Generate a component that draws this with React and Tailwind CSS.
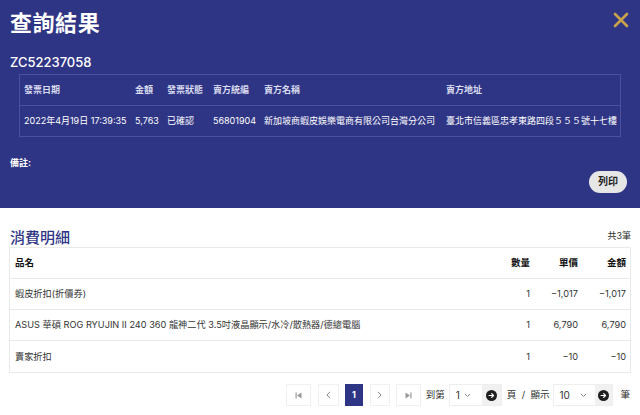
import React from 'react';

const font = { fontFamily: 'Inter, "Noto Sans CJK TC", sans-serif' };

const infoCols = 'grid grid-cols-[111px_32px_46px_51px_182px_1fr]';
const itemCols = 'grid grid-cols-[1fr_48px_48px_48px]';

const items = [
  { name: '蝦皮折扣(折價券)', qty: '1', price: '−1,017', total: '−1,017' },
  { name: 'ASUS 華碩 ROG RYUJIN II 240 360 龍神二代 3.5吋液晶顯示/水冷/散熱器/德總電腦', qty: '1', price: '6,790', total: '6,790' },
  { name: '賣家折扣', qty: '1', price: '−10', total: '−10' },
];

function GoIcon() {
  return (
    <svg width="11" height="11" viewBox="0 0 16 16">
      <circle cx="8" cy="8" r="8" fill="#1f1f1f" />
      <path d="M4.5 8h6.5M8.2 5.2 11 8l-2.8 2.8" stroke="#fff" strokeWidth="1.8" fill="none" strokeLinecap="round" strokeLinejoin="round" />
    </svg>
  );
}

function PageBtn({ children, w = 'w-[25px]' }) {
  return (
    <div className={`${w} h-[22px] flex items-center justify-center border border-[#f0f0f0] bg-white`}>
      {children}
    </div>
  );
}

const Edge = ({ dir }) => (
  <svg width="7" height="7" viewBox="0 0 7 7">
    {dir === 'left' ? (
      <>
        <rect x="0.5" y="0.5" width="1.2" height="6" fill="#999" />
        <path d="M6.5 0.5v6L2 3.5z" fill="#999" />
      </>
    ) : (
      <>
        <rect x="5.3" y="0.5" width="1.2" height="6" fill="#999" />
        <path d="M0.5 0.5v6L5 3.5z" fill="#999" />
      </>
    )}
  </svg>
);

const Arrow = ({ dir }) => (
  <svg width="5" height="8" viewBox="0 0 5 8">
    <path d={dir === 'left' ? 'M4 0.8 1 4l3 3.2' : 'M1 0.8 4 4 1 7.2'} stroke="#888" strokeWidth="1" fill="none" />
  </svg>
);

function Chevron() {
  return (
    <svg width="7" height="5" viewBox="0 0 7 5">
      <path d="M1 1l2.5 2.5L6 1" stroke="#888" strokeWidth="1" fill="none" />
    </svg>
  );
}

export default function App() {
  return (
    <div className="w-[640px] h-[415px] bg-white overflow-hidden" style={font}>
      {/* Header */}
      <div className="bg-[#2f3585] h-[208px] px-[10px] pt-[8px] text-white">
        <div className="flex justify-between items-start">
          <h1 className="text-[22px] leading-[30px] font-semibold tracking-wide">查詢結果</h1>
          <svg width="16" height="16" viewBox="0 0 16 16" className="mt-[4px] mr-[1px]">
            <path d="M2 2l12 12M14 2 2 14" stroke="#c9a24c" strokeWidth="2.6" strokeLinecap="round" />
          </svg>
        </div>
        <div className="mt-[15px] text-[13px] leading-[18px] font-medium">ZC52237058</div>
        <div className="ml-[9px] mr-[9px] mt-[3px] border border-[#4b519c] text-[9px]">
          <div className={`${infoCols} h-[31px] items-center border-b border-[#4b519c] font-bold text-[#d9dbef]`}>
            <div className="pl-[4px]">發票日期</div>
            <div className="pl-[4px]">金額</div>
            <div className="pl-[4px]">發票狀態</div>
            <div className="pl-[4px]">賣方統編</div>
            <div className="pl-[4px]">賣方名稱</div>
            <div className="pl-[4px]">賣方地址</div>
          </div>
          <div className={`${infoCols} h-[30px] items-center whitespace-nowrap`}>
            <div className="pl-[4px]">2022年4月19日 17:39:35</div>
            <div className="pl-[4px]">5,763</div>
            <div className="pl-[4px]">已確認</div>
            <div className="pl-[4px]">56801904</div>
            <div className="pl-[4px]">新加坡商蝦皮娛樂電商有限公司台灣分公司</div>
            <div className="pl-[4px]">臺北市信義區忠孝東路四段５５５號十七樓</div>
          </div>
        </div>
        <div className="mt-[19px] text-[9px] font-bold">備註:</div>
        <div className="flex justify-end mt-[1px] mr-[3px]">
          <button className="h-[22px] px-[9px] rounded-full bg-[#e6e6e6] text-[#222] text-[10px] font-bold">列印</button>
        </div>
      </div>

      {/* Items */}
      <div className="px-[9px]">
        <div className="flex justify-between items-end pt-[20px]">
          <h2 className="pl-[1px] text-[15px] leading-[19px] font-medium text-[#2f3585]">消費明細</h2>
          <span className="text-[9px] text-[#333] mb-[5px]">共3筆</span>
        </div>
        <div className="border border-[#eaeaea] text-[9.2px] text-[#333]">
          <div className={`${itemCols} h-[31px] items-center border-b border-[#eaeaea] font-bold text-[#111] text-[9.5px]`}>
            <div className="pl-[5px]">品名</div>
            <div className="text-right pr-[4px]">數量</div>
            <div className="text-right pr-[4px]">單價</div>
            <div className="text-right pr-[4px]">金額</div>
          </div>
          {items.map((it, i) => (
            <div
              key={i}
              className={`${itemCols} h-[31px] items-center ${i < items.length - 1 ? 'border-b border-[#eaeaea]' : ''}`}
            >
              <div className="pl-[5px] whitespace-nowrap">{it.name}</div>
              <div className="text-right pr-[4px]">{it.qty}</div>
              <div className="text-right pr-[4px]">{it.price}</div>
              <div className="text-right pr-[4px]">{it.total}</div>
            </div>
          ))}
        </div>

        {/* Pagination */}
        <div className="flex items-center justify-end mt-[11px] pr-[1px] text-[10px] text-[#333]">
          <PageBtn><Edge dir="left" /></PageBtn>
          <div className="ml-[7px]"><PageBtn w="w-[21px]"><Arrow dir="left" /></PageBtn></div>
          <div className="ml-[6px] w-[18px] h-[22px] flex items-center justify-center bg-[#2f3585] text-white text-[9px] font-bold">1</div>
          <div className="ml-[7px]"><PageBtn w="w-[20px]"><Arrow dir="right" /></PageBtn></div>
          <div className="ml-[6px]"><PageBtn><Edge dir="right" /></PageBtn></div>
          <span className="ml-[5px] text-[9.5px]">到第</span>
          <div className="ml-[4px] flex h-[22px] border border-[#eeeeee]">
            <div className="w-[32px] flex items-center gap-[4px] pl-[6px] bg-white">1 <Chevron /></div>
            <div className="w-[19px] flex items-center justify-center bg-[#f1f1f1]"><GoIcon /></div>
          </div>
          <span className="ml-[5px] text-[9.5px] whitespace-pre">頁  /  顯示</span>
          <div className="ml-[4px] flex h-[22px] border border-[#eeeeee]">
            <div className="w-[41px] flex items-center gap-[10px] pl-[5px] bg-white">10 <Chevron /></div>
            <div className="w-[17px] flex items-center justify-center bg-[#f1f1f1]"><GoIcon /></div>
          </div>
          <span className="ml-[7px] text-[9.5px]">筆</span>
        </div>
      </div>
    </div>
  );
}
